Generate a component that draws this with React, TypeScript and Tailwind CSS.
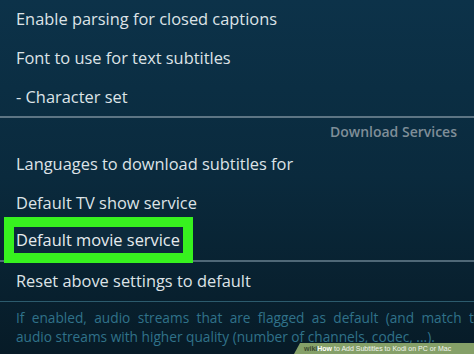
import React from "react";

const font = { fontFamily: '"Open Sans", "Noto Sans", sans-serif' };

function Row({ children, h = "h-[39px]" }: { children: React.ReactNode; h?: string }) {
  return (
    <div className={`${h} flex items-center pl-4 text-[16.4px] text-[#dde3e7] whitespace-nowrap`}>
      {children}
    </div>
  );
}

export default function App() {
  return (
    <div
      className="relative w-[474px] h-[354px] overflow-hidden bg-gradient-to-b from-[#0c3249] via-[#0a2a3d] to-[#071b27]"
      style={font}
    >
      <div className="flex flex-col">
        <Row>Enable parsing for closed captions</Row>
        <Row>Font to use for text subtitles</Row>
        <Row h="h-[38px]">- Character set</Row>
        <div className="h-[2px] bg-[#5d7584]" />
        <div className="h-[27px] flex items-center justify-end pr-[17px] text-[14px] font-semibold text-[#7f8e98]">
          Download Services
        </div>
        <Row>Languages to download subtitles for</Row>
        <Row>Default TV show service</Row>
        <Row h="h-[37px]">Default movie service</Row>
        <div className="h-[2px] bg-[#4f6877]" />
        <Row>Reset above settings to default</Row>
        <div className="h-px bg-[#2c5b6d]" />
        <div className="pl-4 pt-[6px] text-[13.7px] leading-[19px] text-[#30728a] whitespace-nowrap">
          <div className="[word-spacing:3.8px]">
            If enabled, audio streams that are flagged as default (and match the
          </div>
          <div>audio streams with higher quality (number of channels, codec, ...).</div>
        </div>
      </div>

      {/* green highlight box */}
      <div className="absolute left-[4px] top-[217px] w-[189px] h-[46px] border-[10px] border-[#37f21f]">
        <div className="h-full w-full bg-[#0d2a3c] flex items-center pl-[2px] text-[16.4px] text-[#e6ebee] whitespace-nowrap">
          Default movie service
        </div>
      </div>

      {/* wikiHow banner */}
      <div
        className="absolute right-0 bottom-0 w-[180px] h-[11px] bg-[#85a068] [clip-path:polygon(6px_0,100%_0,100%_100%,0_100%)] flex items-center pl-[10px] text-[7px] leading-none whitespace-nowrap"
        style={{ fontFamily: '"Liberation Sans", Arial, sans-serif' }}
      >
        <span className="font-bold text-[#3c4a30]">wiki</span>
        <span className="font-bold text-white">How</span>
        <span className="text-[#f2f5ee] ml-[2px]">to Add Subtitles to Kodi on PC or Mac</span>
      </div>
    </div>
  );
}
